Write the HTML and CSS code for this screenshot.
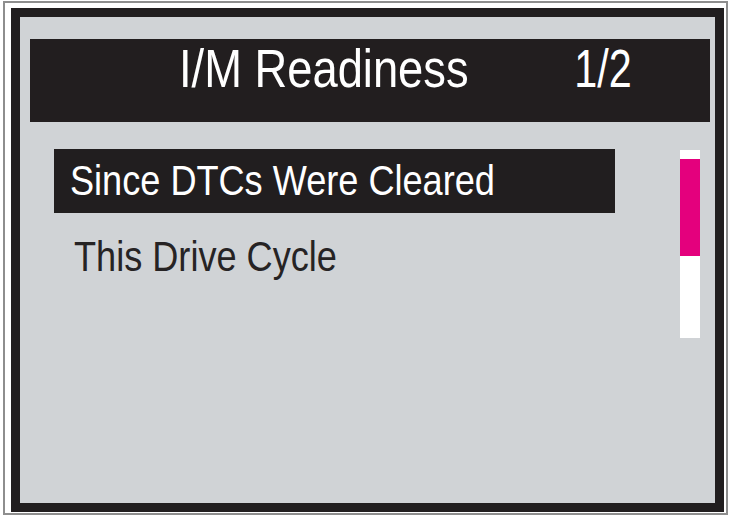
FILE: index.html
```html
<!DOCTYPE html>
<html lang="en">
<head>
<meta charset="utf-8">
<title>I/M Readiness</title>
<link rel="stylesheet" href="styles.css">
</head>
<body>
<div class="frame">
  <div class="screen">
    <div class="header">
      <span class="title">I/M Readiness</span>
      <span class="page">1/2</span>
    </div>
    <div class="content">
      <div class="menu">
        <div class="item selected"><span class="label">Since DTCs Were Cleared</span></div>
        <div class="item"><span class="label">This Drive Cycle</span></div>
      </div>
      <div class="scroll"><div class="thumb"></div></div>
    </div>
  </div>
</div>
</body>
</html>
```

FILE: styles.css
```css
html, body {
  margin: 0;
  padding: 0;
  background: #ffffff;
}

body {
  font-family: "Liberation Sans Narrow", "Arial Narrow", "Liberation Sans", Arial, sans-serif;
}

.frame {
  margin: 1px 0 0 3px;
  width: 713px;
  border: 2px solid #8e8e8e;
  padding: 5px 2px 1px 6px;
}

.screen {
  width: 680px;
  height: 464px;
  border: 9px solid #211e1f;
  background: #d0d3d6;
  padding: 22px 5px 0 10px;
}

.header {
  height: 83px;
  background: #221e1f;
  color: #ffffff;
  display: flex;
  justify-content: space-between;
  align-items: flex-start;
  padding: 3px 78px 0 149px;
  box-sizing: border-box;
  font-size: 53px;
  line-height: 53px;
}

.title {
  display: inline-block;
  white-space: nowrap;
  transform: scaleX(0.855);
  transform-origin: left center;
}

.page {
  display: inline-block;
  white-space: nowrap;
  transform: scaleX(0.78);
  transform-origin: right center;
}

.content {
  display: flex;
  align-items: flex-start;
  margin-top: 27px;
  padding-left: 24px;
}

.menu {
  width: 561px;
  display: flex;
  flex-direction: column;
  gap: 12px;
}

.item {
  height: 64px;
  line-height: 64px;
  font-size: 42px;
  color: #262324;
  padding-left: 20px;
  white-space: nowrap;
}

.item.selected {
  background: #211e1f;
  color: #ffffff;
  padding-left: 16px;
}

.label {
  display: inline-block;
  transform: scaleX(0.86);
  transform-origin: left center;
}

.scroll {
  margin-left: 65px;
  margin-top: 1px;
  width: 20px;
  height: 188px;
  background: #ffffff;
}

.thumb {
  margin-top: 9px;
  height: 97px;
  background: #e4007d;
}
```
